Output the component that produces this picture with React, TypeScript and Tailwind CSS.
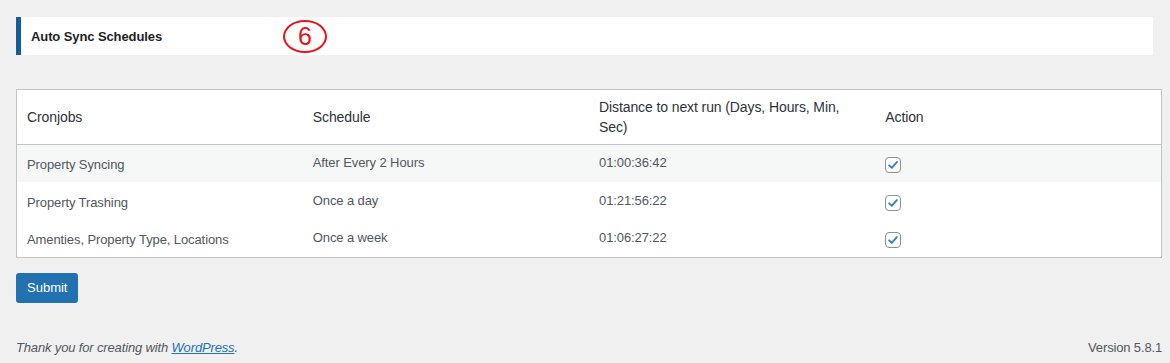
import { FC } from "react";

type Cronjob = {
  name: string;
  schedule: string;
  nextRun: string;
};

const cronjobs: Cronjob[] = [
  { name: "Property Syncing", schedule: "After Every 2 Hours", nextRun: "01:00:36:42" },
  { name: "Property Trashing", schedule: "Once a day", nextRun: "01:21:56:22" },
  { name: "Amenties, Property Type, Locations", schedule: "Once a week", nextRun: "01:06:27:22" },
];

const CheckBox: FC = () => {
  return (
    <span className="flex h-4 w-4 items-center justify-center rounded-[4px] border border-[#8c8f94] bg-white">
      <svg viewBox="0 0 16 16" className="h-[14px] w-[14px]">
        <path
          d="M3.6 8.4 L6.6 11.2 L12.4 4.6"
          fill="none"
          stroke="#3582c4"
          strokeWidth="2.2"
          strokeLinecap="round"
          strokeLinejoin="round"
        />
      </svg>
    </span>
  );
};

const App = () => {
  return (
    <div className="min-h-[363px] w-[1170px] bg-[#f0f0f1] font-['Segoe_UI','Liberation_Sans',sans-serif] text-[13px] text-[#3c434a]">
      <div className="px-4 pt-[17px]">
        {/* section title */}
        <div className="mr-[1px] flex h-[38px] items-center border-l-[5px] border-[#135e96] bg-white pl-[10px]">
          <h2 className="pt-[1px] text-[13px] font-bold tracking-[-0.1px] text-[#1d2327]">Auto Sync Schedules</h2>
          <span className="ml-[121px] flex h-[33px] w-[44px] items-center justify-center rounded-[50%] border-[2px] border-[#e8141c] text-[25px] leading-none text-[#e8141c]">
            6
          </span>
        </div>

        <div className="mr-[-8px] mt-[34px]">
          <table className="w-[1146px] table-fixed border-collapse border border-[#c3c4c7] bg-white tracking-[-0.1px]">
            <thead>
              <tr className="h-[55px] border-b border-[#c3c4c7]">
                <th className="px-[10px] text-left align-middle text-[14px] font-normal leading-5 text-[#2c3338]">Cronjobs</th>
                <th className="px-[10px] text-left align-middle text-[14px] font-normal leading-5 text-[#2c3338]">Schedule</th>
                <th className="px-[10px] text-left align-middle text-[14px] font-normal leading-5 text-[#2c3338]">
                  Distance to next run (Days, Hours, Min,
                  <br />
                  Sec)
                </th>
                <th className="px-[10px] text-left align-middle text-[14px] font-normal leading-5 text-[#2c3338]">Action</th>
              </tr>
            </thead>
            <tbody>
              {cronjobs.map((job, i) => (
                <tr key={i} className={`h-[37.7px] ${i === 0 ? "bg-[#f6f7f7]" : "bg-white"}`}>
                  <td className="px-[10px] pt-[3px] align-middle leading-5 text-[#50575e]">{job.name}</td>
                  <td className="px-[10px] pb-[1px] align-middle leading-5 text-[#50575e]">{job.schedule}</td>
                  <td className="px-[10px] pb-[1px] align-middle leading-5 text-[#50575e]">{job.nextRun}</td>
                  <td className="px-[10px] pt-[3px] align-middle">
                    <CheckBox />
                  </td>
                </tr>
              ))}
            </tbody>
          </table>
        </div>

        <button className="mt-[15px] h-[30px] rounded-[3px] bg-[#2271b1] px-[11px] text-[13px] text-white">Submit</button>

        <div className="mt-[35px] flex items-center justify-between tracking-[-0.15px]">
          <p className="italic text-[#50575e]">
            Thank you for creating with{" "}
            <a className="text-[#2271b1] underline" href="#">
              WordPress
            </a>
            .
          </p>
          <p className="mr-[-8px] text-[#50575e]">Version 5.8.1</p>
        </div>
      </div>
    </div>
  );
};

export default App;
